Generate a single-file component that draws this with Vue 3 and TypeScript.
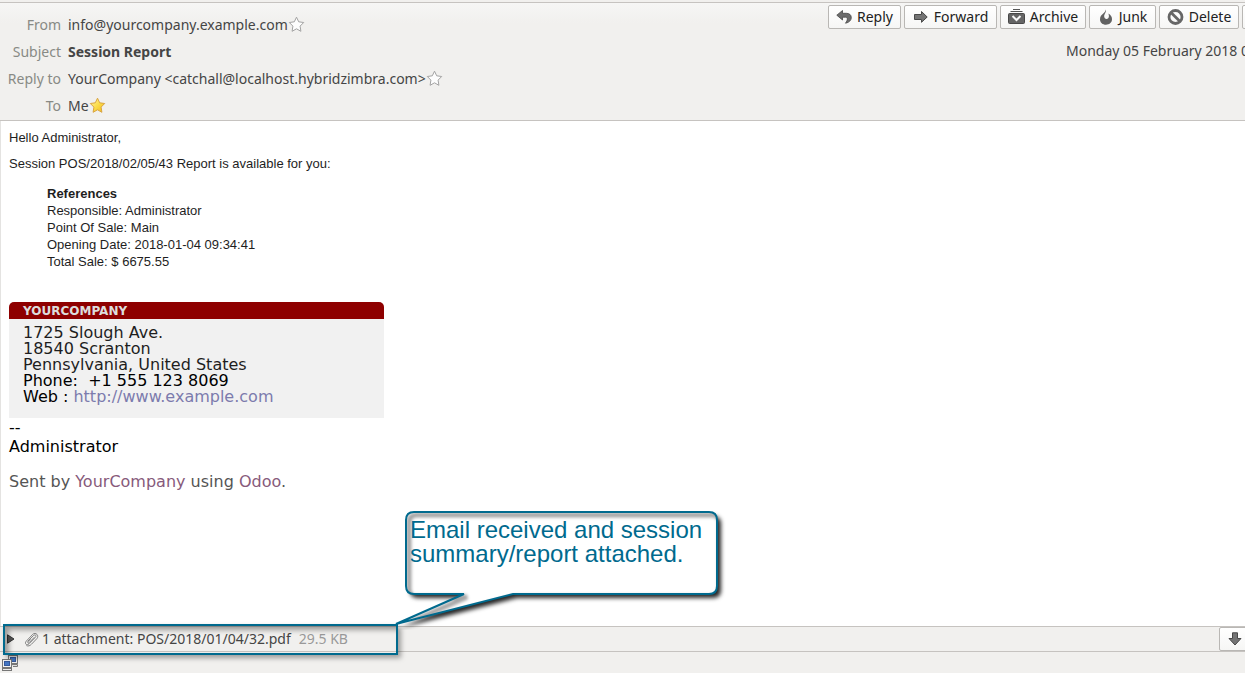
<script setup lang="ts">
interface HeaderRow {
  label: string
  value: string
  star?: 'empty' | 'full'
  strong?: boolean
}

const rows: HeaderRow[] = [
  { label: 'From', value: 'info@yourcompany.example.com', star: 'empty' },
  { label: 'Subject', value: 'Session Report', strong: true },
  { label: 'Reply to', value: 'YourCompany <catchall@localhost.hybridzimbra.com>', star: 'empty' },
  { label: 'To', value: 'Me', star: 'full' },
]

const references: string[] = [
  'Responsible: Administrator',
  'Point Of Sale: Main',
  'Opening Date: 2018-01-04 09:34:41',
  'Total Sale: $ 6675.55',
]
</script>

<template>
  <div class="window">
    <header class="head">
      <dl class="fields">
        <div v-for="row in rows" :key="row.label" class="field">
          <dt>{{ row.label }}</dt>
          <dd :class="{ strong: row.strong }">{{ row.value }}</dd>
          <dd v-if="row.star">
            <button type="button" class="star" :class="row.star" aria-label="Contact star">
              <svg width="17" height="17" viewBox="0 0 17 17">
                <defs>
                  <linearGradient id="gold" x1="0" y1="0" x2="1" y2="1">
                    <stop offset="0" stop-color="#fff6a8" />
                    <stop offset="0.5" stop-color="#fbdc4a" />
                    <stop offset="1" stop-color="#f0b914" />
                  </linearGradient>
                </defs>
                <path d="M8.5 1.2L10.7 5.8L15.7 6.5L12.1 10.1L12.9 15.3L8.5 12.8L4.1 15.3L4.9 10.1L1.3 6.5L6.3 5.8Z" :fill="row.star === 'full' ? 'url(#gold)' : '#fdfdfd'" />
              </svg>
            </button>
          </dd>
        </div>
      </dl>
      <div class="side">
        <div class="toolbar">
          <button type="button" class="tool reply">
            <svg width="16" height="16" viewBox="0 0 16 16">
              <path d="M6.5 1.5L.8 6.2L6.5 11V8.2H9.5C11.8 8.2 12 10.8 9.5 14.2C13.5 13.4 15.3 11 15.3 8.6C15.3 5.8 13.2 4.3 10.3 4.3H6.5Z" fill="#6c6c6c" stroke="#484848" stroke-width=".8" />
            </svg>
            Reply
          </button>
          <button type="button" class="tool forward">
            <svg width="16" height="16" viewBox="0 0 16 16">
              <path d="M1.5 5.5H8.5V2.5L14.2 8L8.5 13.3V10.5H1.5Z" fill="#747474" stroke="#484848" />
            </svg>
            Forward
          </button>
          <button type="button" class="tool archive">
            <svg width="17" height="16" viewBox="0 0 17 16">
              <path d="M5 .5H12M2.5 2.5H14.5" stroke="#555" />
              <rect x=".5" y="4.5" width="16" height="10" rx="1" fill="#656565" stroke="#484848" />
              <path d="M4.5 7L8.5 11L12.5 7" fill="none" stroke="#f8f8f8" stroke-width="2" />
            </svg>
            Archive
          </button>
          <button type="button" class="tool junk">
            <svg width="16" height="16" viewBox="0 0 16 16">
              <path d="M7.8 .5C8.8 3 6 4.8 6.2 7.6C6.3 9.5 7.7 10.2 9 9.9C11.1 9.4 11.4 7.2 10.4 4.5C13 6.2 14.2 8.3 14 10.5C13.8 13.7 11.2 15.7 8 15.7C4.6 15.7 2 13.6 2 10.2C2 7.5 3.6 5.8 5 4.8C6.5 3.6 7.6 2.3 7.8 .5Z" fill="#626262" />
            </svg>
            Junk
          </button>
          <button type="button" class="tool delete">
            <svg width="17" height="16" viewBox="0 0 17 16">
              <circle cx="8.5" cy="8" r="6.5" fill="none" stroke="#666" stroke-width="2.8" />
              <path d="M4.2 3.8L12.8 12.2" stroke="#666" stroke-width="2.8" />
            </svg>
            Delete
          </button>
          <button type="button" class="tool more" aria-label="Other actions"></button>
        </div>
        <time class="date">Monday 05 February 2018 0</time>
      </div>
    </header>

    <main class="message">
      <p>Hello Administrator,</p>
      <p class="intro">Session POS/2018/02/05/43 Report is available for you:</p>
      <div class="refs">
        <strong>References</strong>
        <div v-for="line in references" :key="line">{{ line }}</div>
      </div>
      <section class="card">
        <h3>YOURCOMPANY</h3>
        <address>
          1725 Slough Ave.<br />
          18540 Scranton<br />
          Pennsylvania, United States
          <div class="contact">Phone:&nbsp; +1 555 123 8069</div>
          <div class="contact">Web : <a href="#">http://www.example.com</a></div>
        </address>
      </section>
      <div class="signature">--<br />Administrator</div>
      <p class="sent">Sent by <a href="#">YourCompany</a> using <a href="#">Odoo</a>.</p>
    </main>

    <footer class="foot">
      <div class="attachments">
        <button type="button" class="expander" aria-label="Show attachments">
          <svg width="8" height="10" viewBox="0 0 8 10"><path d="M.5 .8L7 5L.5 9.2Z" fill="#555" stroke="#333" /></svg>
        </button>
        <svg class="clip" width="15" height="15" viewBox="0 0 15 15" fill="none" stroke="#777" stroke-width=".9">
          <path d="M3.6 9.4L9.4 3.6C11.2 2 12.9 3.7 11.3 5.4L5 11.8C2.6 14 .1 11.5 2.3 9.1L8.6 2.4C11.7-.4 15.6 3.6 12.8 6.7L7.4 12.3C6 13.8 4.2 14.4 2.4 13.6" />
          <path d="M5.2 10.6L10.4 5.2M6.4 7.2L4 9.8C3.4 11.2 4.4 11.6 5.2 10.6" />
        </svg>
        <span>1 attachment: POS/2018/01/04/32.pdf</span>
        <span class="size">29.5 KB</span>
        <button type="button" class="save" aria-label="Save attachment">
          <svg width="14" height="14" viewBox="0 0 14 14"><path d="M4.5 .8H9.5V6.5H13L7 13L1 6.5H4.5Z" fill="#747474" stroke="#484848" /></svg>
        </button>
      </div>
      <div class="status">
        <svg width="16" height="16" viewBox="0 0 16 16">
          <rect x="6.5" y=".5" width="9" height="8" fill="#eee" stroke="#777" />
          <rect x="8.5" y="2.5" width="5" height="4" fill="#4477c4" stroke="#35599c" />
          <path d="M7.5 9.5H15.5V11.5H11" fill="#ddd" stroke="#777" />
          <rect x=".5" y="4.5" width="9" height="8" fill="#f2f2f2" stroke="#777" />
          <rect x="2.5" y="6.5" width="5" height="4" fill="#4477c4" stroke="#35599c" />
          <rect x=".5" y="13.5" width="9" height="2" fill="#eee" stroke="#777" />
        </svg>
      </div>
      <div class="highlight"></div>
      <div class="callout">
        <svg width="345" height="130" viewBox="0 0 345 130">
          <defs>
            <path id="balloon" d="M24 12H319Q327 12 327 20V86Q327 94 319 94H123L6 124L74 94H24Q16 94 16 86V20Q16 12 24 12Z" />
            <filter id="outer" x="-10%" y="-10%" width="125%" height="130%">
              <feDropShadow dx="4" dy="4" stdDeviation="2" flood-color="#000" flood-opacity=".85" />
            </filter>
            <filter id="inner" x="-10%" y="-10%" width="125%" height="130%">
              <feGaussianBlur stdDeviation="1.8" />
              <feOffset dx="3" dy="3" />
            </filter>
            <clipPath id="bubble"><use href="#balloon" /></clipPath>
          </defs>
          <use href="#balloon" fill="#fff" filter="url(#outer)" />
          <g clip-path="url(#bubble)">
            <use href="#balloon" fill="none" stroke="#000" stroke-opacity=".35" stroke-width="5" filter="url(#inner)" />
          </g>
          <use href="#balloon" fill="none" stroke="#006a8e" stroke-width="2" />
        </svg>
        <p>Email received and session<br />summary/report attached.</p>
      </div>
    </footer>
  </div>
</template>

<style>
body {
  margin: 0;
  overflow: hidden;
}
</style>

<style scoped>
.window {
  display: flex;
  flex-direction: column;
  min-height: 100vh;
  overflow: hidden;
  background: #f1f0ee;
  color: #454545;
  font: 14px/20px "Noto Sans", "Open Sans", sans-serif;
}
.head {
  display: flex;
  justify-content: space-between;
  margin-top: 2px;
  border-top: 1px solid #c6c3c0;
  border-bottom: 1px solid #c6c3c0;
  background: linear-gradient(#f6f6f5, #f1f0ee 20px);
}
.fields {
  margin: 0;
  padding: 8px 0 1px;
}
.field {
  display: flex;
  align-items: center;
  height: 27px;
}
dt {
  width: 61px;
  margin-right: 7px;
  color: #888a85;
  text-align: right;
  white-space: nowrap;
}
dd {
  margin: 0;
  white-space: nowrap;
}
.strong {
  font-weight: 700;
}
button {
  font: inherit;
  padding: 0;
}
.star {
  display: block;
  border: 0;
  background: none;
  height: 20px;
}
.star svg {
  display: block;
  stroke: #a3a3a3;
}
.star.full svg {
  stroke: #d9a441;
}
.side {
  display: flex;
  flex-direction: column;
  align-items: flex-end;
  gap: 12px;
  padding-top: 2px;
}
.toolbar {
  display: flex;
  gap: 3px;
  margin-right: -21px;
}
.tool {
  display: flex;
  align-items: center;
  justify-content: center;
  gap: 5px;
  box-sizing: border-box;
  height: 24px;
  border: 1px solid #b9b7b4;
  border-radius: 2px;
  background: linear-gradient(#fff, #f6f6f5);
  color: #222;
}
.reply { width: 73px; }
.forward { width: 93px; }
.archive { width: 86px; }
.junk { width: 67px; }
.delete { width: 80px; }
.more { width: 24px; }
.date {
  margin-right: -4px;
  white-space: nowrap;
}
.message {
  flex: 1;
  padding: 8px 8px 0;
  border-left: 1px solid #e4e3e1;
  background: #fff;
  color: #1e1e1e;
  font: 13px/17px "Liberation Sans", Arial, sans-serif;
}
p {
  margin: 0;
}
.intro {
  margin-top: 9px;
}
.refs {
  margin: 13px 0 0 38px;
}
.card {
  max-width: 375px;
  margin-top: 32px;
  background: #f1f1f1;
  font: 16px/16px "DejaVu Sans", sans-serif;
  border-radius: 5px 5px 0 0;
}
.card h3 {
  margin: 0;
  padding: 1px 14px 0;
  border-radius: 5px 5px 0 0;
  background: #8e0000;
  color: #ddd;
  font-size: 12px;
  line-height: 16px;
}
address {
  padding: 6px 14px 13px;
  font-style: normal;
}
.contact {
  color: #000;
}
a {
  color: #875a7b;
  text-decoration: none;
}
.contact a {
  color: #7c7bad;
}
.signature {
  color: #000;
  font: 16px/19px "DejaVu Sans", sans-serif;
}
.sent {
  margin: 16px 0 0;
  color: #555;
  font: 16px/19px "DejaVu Sans", sans-serif;
}
.foot {
  position: relative;
}
.attachments {
  display: flex;
  align-items: center;
  height: 24px;
  border-top: 1px solid #c6c3c0;
  border-bottom: 1px solid #c6c3c0;
}
.expander {
  display: flex;
  margin-left: 7px;
  border: 0;
  background: none;
}
.clip {
  margin: 0 3px 0 9px;
}
.size {
  margin-left: 8px;
  color: #999;
}
.save {
  display: flex;
  align-items: center;
  justify-content: center;
  box-sizing: border-box;
  width: 32px;
  height: 24px;
  margin: 0 -6px 0 auto;
  border: 1px solid #b9b7b4;
  border-radius: 2px;
  background: linear-gradient(#fff, #f6f6f5);
}
.status {
  padding: 3px 2px 2px;
}
.status svg {
  display: block;
}
.highlight {
  position: absolute;
  left: 3px;
  bottom: 18px;
  box-sizing: border-box;
  width: 395px;
  height: 31px;
  border: 2px solid #006a8e;
  box-shadow: 3px 3px 5px rgba(0, 0, 0, 0.35), inset 4px 4px 5px rgba(0, 0, 0, 0.35);
}
.callout {
  position: absolute;
  left: 390px;
  bottom: 43px;
}
.callout svg {
  display: block;
}
.callout p {
  position: absolute;
  left: 20px;
  top: 18px;
  color: #006a8e;
  font: 24px/24px "Liberation Sans", Arial, sans-serif;
  white-space: nowrap;
}
</style>
